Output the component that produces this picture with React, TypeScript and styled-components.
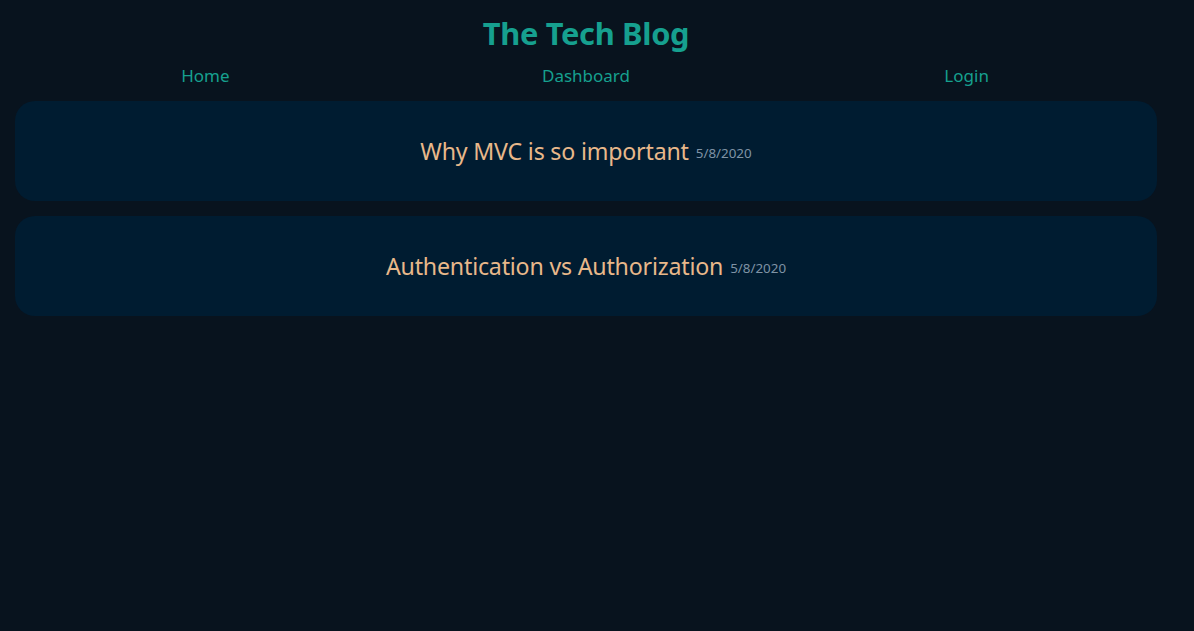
import React from "react";
import styled, { createGlobalStyle } from "styled-components";

const Global = createGlobalStyle`
  html, body { margin: 0; padding: 0; background: #08131e; }
  body { font-family: "Noto Sans", "Open Sans", sans-serif; }
`;

const Page = styled.div`
  width: 1142px;
  margin-left: 15px;
  min-height: 631px;
  display: flex;
  flex-direction: column;
`;

const Header = styled.header`
  display: flex;
  flex-direction: column;
  align-items: center;
`;

const Title = styled.h1`
  margin: 12px 0 0;
  font-size: 30.8px;
  font-weight: 700;
  line-height: 42px;
  color: #16a08f;
  letter-spacing: -0.3px;
`;

const Nav = styled.nav`
  width: 100%;
  display: flex;
  justify-content: space-around;
  margin-top: 2px;
`;

const NavLink = styled.a`
  font-size: 17px;
  line-height: 40px;
  color: #16a08f;
  text-decoration: none;
  width: 200px;
  text-align: center;
`;

const List = styled.main`
  display: flex;
  flex-direction: column;
  gap: 15px;
  margin-top: 5px;
`;

const Card = styled.article`
  height: 100px;
  border-radius: 20px;
  background: #001c31;
  display: flex;
  align-items: center;
  justify-content: center;
`;

const PostTitle = styled.span`
  font-size: 23.2px;
  color: #e8b88a;
  letter-spacing: -0.2px;
`;

const PostDate = styled.span`
  font-size: 13.4px;
  color: #7f93a5;
  margin-left: 7px;
  position: relative;
  top: 2px;
`;

const posts = [
  { title: "Why MVC is so important", date: "5/8/2020" },
  { title: "Authentication vs Authorization", date: "5/8/2020" },
];

export default function App() {
  return (
    <>
      <Global />
      <Page>
        <Header>
          <Title>The Tech Blog</Title>
          <Nav>
            <NavLink href="#">Home</NavLink>
            <NavLink href="#">Dashboard</NavLink>
            <NavLink href="#">Login</NavLink>
          </Nav>
        </Header>
        <List>
          {posts.map((p) => (
            <Card key={p.title}>
              <PostTitle>{p.title}</PostTitle>
              <PostDate>{p.date}</PostDate>
            </Card>
          ))}
        </List>
      </Page>
    </>
  );
}
